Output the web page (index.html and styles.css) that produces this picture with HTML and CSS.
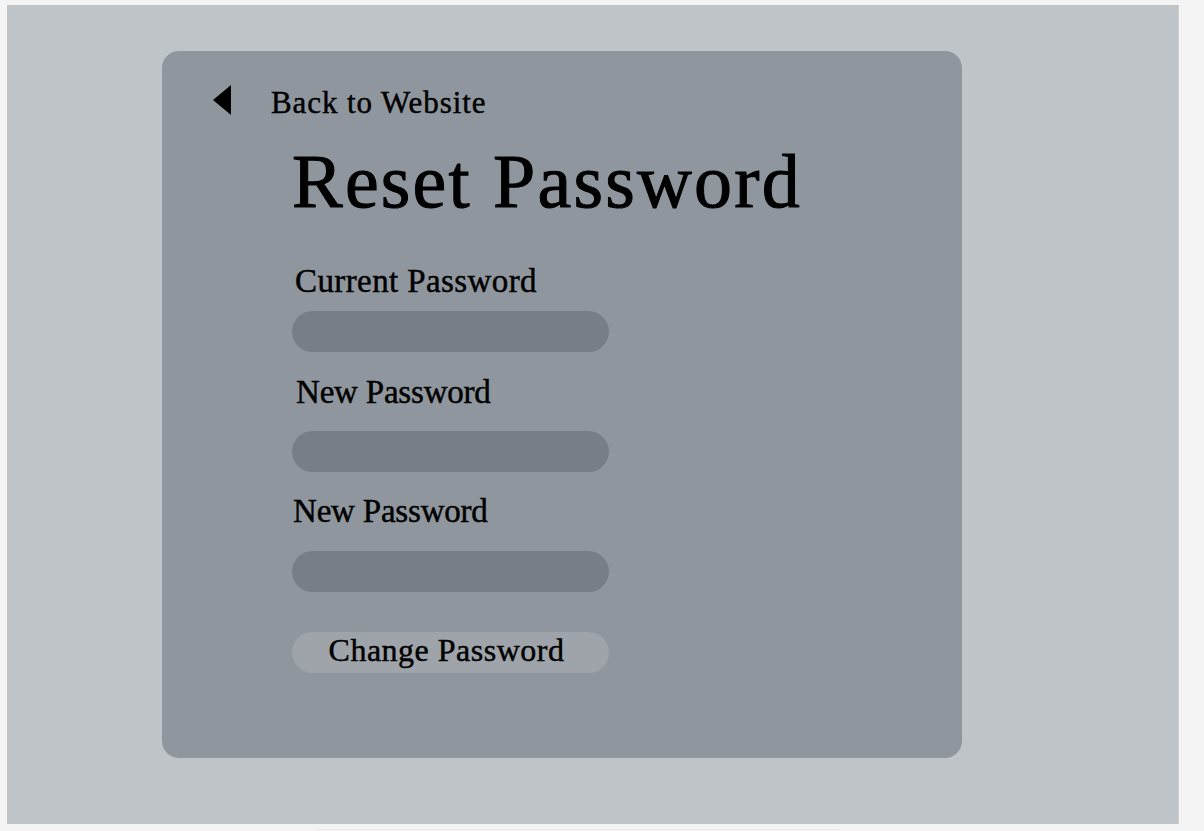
FILE: index.html
```html
<!DOCTYPE html>
<html lang="en">
<head>
<meta charset="utf-8">
<title>Reset Password</title>
<link rel="stylesheet" href="styles.css">
</head>
<body>
<div class="frame">
  <div class="card">
    <a class="back" href="#">
      <svg class="back-icon" width="18" height="30" viewBox="0 0 18 30"><polygon points="18,0 18,30 0,15" fill="#000"/></svg>
      <span class="back-text">Back to Website</span>
    </a>
    <form class="form">
      <h1 class="title">Reset Password</h1>
      <label class="label label-current">Current Password</label>
      <div class="input input-1"></div>
      <label class="label label-new1">New Password</label>
      <div class="input input-2"></div>
      <label class="label label-new2">New Password</label>
      <div class="input input-3"></div>
      <button type="button" class="btn">Change Password</button>
    </form>
  </div>
</div>
<div class="footer-line"></div>
</body>
</html>
```
FILE: styles.css
```css
html, body {
  margin: 0;
  padding: 0;
}
body {
  background: #f4f4f4;
  padding: 5px 0 0 7px;
  font-family: "Liberation Serif", "Times New Roman", serif;
  color: #000;
}
.frame {
  width: 1172px;
  height: 819px;
  box-sizing: border-box;
  background: #bfc4c8;
  border-right: 1px solid #ccd0d3;
  padding: 46px 0 0 155px;
}
.card {
  width: 800px;
  height: 707px;
  box-sizing: border-box;
  background: #8f969d;
  border-radius: 17px;
  padding-top: 34px;
  display: flex;
  flex-direction: column;
}
.back {
  display: flex;
  align-items: flex-start;
  margin-left: 51px;
  text-decoration: none;
  color: #000;
}
.back-icon {
  display: block;
  flex: none;
}
.back-text {
  margin-left: 40px;
  font-size: 31px;
  line-height: 36px;
  letter-spacing: 0.9px;
  -webkit-text-stroke: 0.45px #000;
}
.form {
  display: flex;
  flex-direction: column;
  align-items: flex-start;
  padding-left: 130px;
  margin: 0;
}
.title {
  margin: 20px 0 0 0;
  font-size: 76px;
  line-height: 80px;
  font-weight: normal;
  letter-spacing: 2.2px;
  -webkit-text-stroke: 1px #000;
}
.label {
  display: block;
  font-size: 33px;
  line-height: 40px;
  letter-spacing: -0.2px;
  -webkit-text-stroke: 0.45px #000;
}
.label-current { margin: 40px 0 0 3px; letter-spacing: 0.4px; }
.label-new1 { margin: 20px 0 0 4px; }
.label-new2 { margin: 19px 0 0 1px; }
.input {
  width: 317px;
  height: 41px;
  border-radius: 21px;
  background: #777e86;
}
.input-1 { margin-top: 10px; }
.input-2 { margin-top: 19px; }
.input-3 { margin-top: 20px; }
.btn {
  margin-top: 40px;
  width: 317px;
  height: 41px;
  box-sizing: border-box;
  border: none;
  border-radius: 21px;
  background: #9ea4a9;
  padding: 0 8px 5px 0;
  font-family: "Liberation Serif", "Times New Roman", serif;
  font-size: 32px;
  line-height: 36px;
  letter-spacing: 0.5px;
  color: #000;
  -webkit-text-stroke: 0.45px #000;
}
.footer-line {
  margin: 5px 0 0 308px;
  width: 525px;
  height: 1px;
  background: #ebebeb;
}
```
